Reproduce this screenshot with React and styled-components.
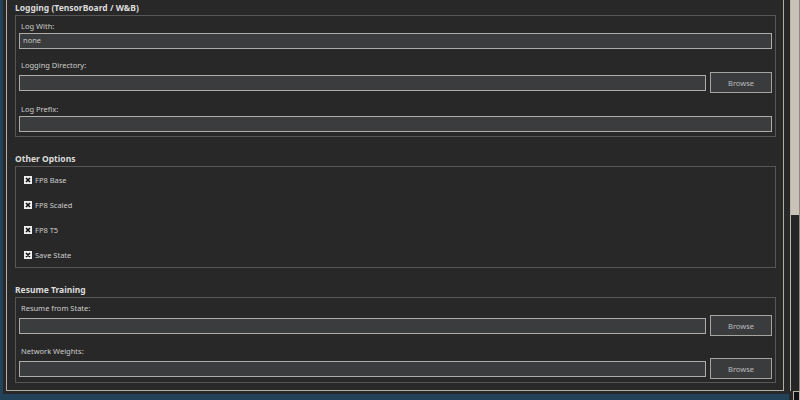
import React from 'react';
import styled, { createGlobalStyle } from 'styled-components';

const GlobalStyle = createGlobalStyle`
  html, body {
    margin: 0;
    padding: 0;
    background: #22425a;
    overflow: hidden;
  }
  body {
    font-family: "Noto Sans", "Open Sans", sans-serif;
  }
`;

const Screen = styled.div`
  display: flex;
  width: 800px;
  height: 400px;
`;

const Viewport = styled.div`
  width: 786px;
  height: 394px;
  margin-left: 3px;
  padding: 0 5px 3px 3px;
  box-sizing: border-box;
  background: #282828;
  overflow: hidden;
`;

const Frame = styled.div`
  height: 100%;
  box-sizing: border-box;
  border: 1px solid #b3afa8;
  border-top: none;
  padding: 0 7px 7px 8px;
  display: flex;
  flex-direction: column;
  gap: 14px;
`;

const Section = styled.section`
  display: flex;
  flex-direction: column;
`;

const Title = styled.div`
  height: 15px;
  line-height: 15px;
  font-size: 8.5px;
  font-weight: 700;
  color: #dcdcdc;
`;

const Group = styled.div`
  border: 1px solid #565656;
  padding: ${(p) => p.$pad || '4px 3px 4px 3px'};
  display: flex;
  flex-direction: column;
  gap: ${(p) => p.$gap || '0'};
`;

const Field = styled.div`
  display: flex;
  flex-direction: column;
  gap: 1px;
`;

const Label = styled.div`
  height: 12px;
  line-height: 12px;
  padding-left: 2px;
  font-size: 7.5px;
  color: #cdcdcd;
`;

const Row = styled.div`
  display: flex;
  align-items: center;
  gap: 4px;
  height: 21px;
`;

const Input = styled.div`
  flex: 1 1 auto;
  min-width: 0;
  height: 16px;
  box-sizing: border-box;
  border: 1.5px solid #aeada9;
  background: #3b3c3e;
  padding-left: 3px;
  font-size: 7.5px;
  line-height: 13px;
  color: #c6c6c6;
`;

const Button = styled.div`
  width: 62px;
  height: 21px;
  box-sizing: border-box;
  border: 1.5px solid #a6a4a0;
  background: #3a3b3d;
  display: flex;
  align-items: center;
  justify-content: center;
  font-size: 7.5px;
  color: #bdbdbd;
`;

const Check = styled.div`
  height: 25px;
  display: flex;
  align-items: center;
  gap: 3px;
  padding-left: 8px;
  font-size: 7.5px;
  color: #cdcdcd;
`;

const Scrollbar = styled.div`
  width: 11px;
  height: 400px;
  box-sizing: border-box;
  padding-left: 1px;
  background: #272727;
  display: flex;
  flex-direction: column;
`;

const Track = styled.div`
  flex: 1;
  border-left: 1px solid #b8b3ab;
  border-right: 1px solid #8d8a85;
  background: #262626;
`;

const Thumb = styled.div`
  height: 215px;
  background: #c8c2b9;
`;

const Arrow = styled.div`
  height: 8px;
  margin-left: 3px;
  background: #111;
  border: 1px solid #b8b3ab;
  border-bottom: none;
`;

const CheckBox = () => (
  <svg width="8" height="8" viewBox="0 0 8 8">
    <rect x="0" y="0" width="8" height="8" fill="#eeeeee" />
    <path d="M2 2 L6 6 M6 2 L2 6" stroke="#111" strokeWidth="1.6" />
  </svg>
);

const TextField = ({ label, value }) => (
  <Field>
    <Label>{label}</Label>
    <Input>{value}</Input>
  </Field>
);

const PathField = ({ label }) => (
  <Field>
    <Label>{label}</Label>
    <Row>
      <Input />
      <Button>Browse</Button>
    </Row>
  </Field>
);

const options = ['FP8 Base', 'FP8 Scaled', 'FP8 T5', 'Save State'];

export default function App() {
  return (
    <>
      <GlobalStyle />
      <Screen>
        <Viewport>
          <Frame>
            <Section>
              <Title>Logging (TensorBoard / W&amp;B)</Title>
              <Group $gap="10px">
                <TextField label="Log With:" value="none" />
                <PathField label="Logging Directory:" />
                <TextField label="Log Prefix:" />
              </Group>
            </Section>
            <Section>
              <Title>Other Options</Title>
              <Group $pad="0">
                {options.map((o) => (
                  <Check key={o}>
                    <CheckBox />
                    {o}
                  </Check>
                ))}
              </Group>
            </Section>
            <Section>
              <Title>Resume Training</Title>
              <Group $gap="9px" $pad="4px 3px 3px 3px">
                <PathField label="Resume from State:" />
                <PathField label="Network Weights:" />
              </Group>
            </Section>
          </Frame>
        </Viewport>
        <Scrollbar>
          <Track>
            <Thumb />
          </Track>
          <Arrow />
        </Scrollbar>
      </Screen>
    </>
  );
}
